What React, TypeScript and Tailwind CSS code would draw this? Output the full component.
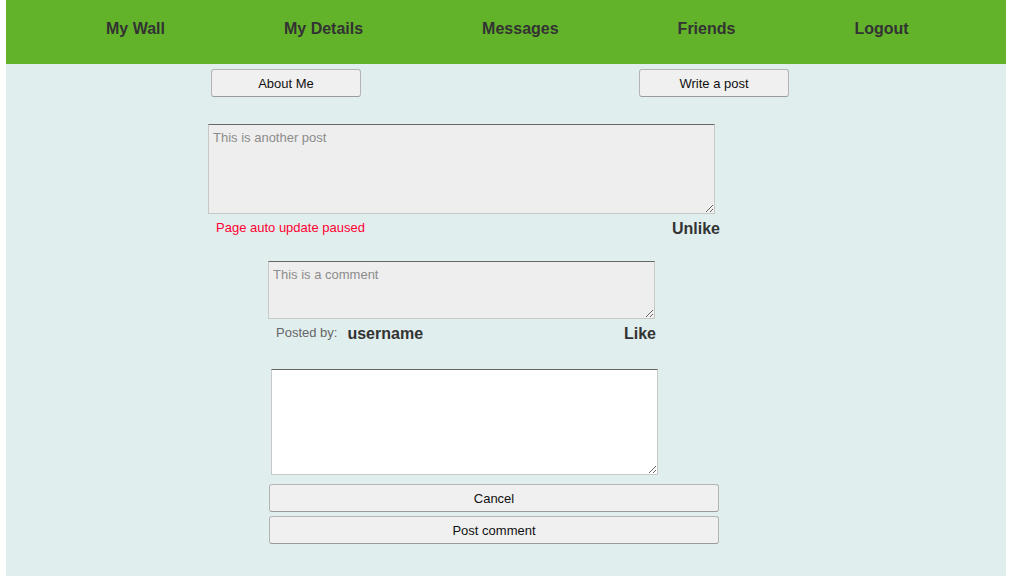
import React from "react";

const btn =
  "block h-[28px] pt-[2px] bg-[#f0f0f0] border border-[#b4b4b4] border-b-[#9a9a9a] rounded-[3px] text-[13px] text-[#111] font-['Liberation_Sans',Arial,sans-serif]";

const ta =
  "block resize border border-[#c8c8c8] border-t-[#666] px-[4px] pt-[5px] pb-[4px] text-[13px] leading-[15px] font-['Liberation_Sans',Arial,sans-serif] outline-none placeholder:text-[#8c8c8c] text-[#8c8c8c]";

export default function App() {
  return (
    <div className="min-h-screen bg-white font-['Liberation_Sans',Arial,sans-serif]">
      <div className="ml-[6px] w-[1000px] min-h-[576px] bg-[#e0eeee]">
        <nav className="h-[64px] bg-[#62b22a] flex items-center pl-[100px] gap-[119px] text-[16px] font-bold text-[#333] pb-[6px]">
          <span>My Wall</span>
          <span>My Details</span>
          <span>Messages</span>
          <span>Friends</span>
          <span>Logout</span>
        </nav>

        <div className="flex mt-[5px]">
          <button className={`${btn} ml-[205px] w-[150px]`}>About Me</button>
          <button className={`${btn} ml-[278px] w-[150px]`}>Write a post</button>
        </div>

        <textarea
          readOnly
          className={`${ta} mt-[27px] ml-[202px] w-[507px] h-[90px] bg-[#eeeeee]`}
          placeholder="This is another post"
        />
        <div className="ml-[210px] w-[504px] h-[26px] pt-[2px] flex items-center justify-between">
          <span className="text-[13px] text-[#ff0033]">Page auto update paused</span>
          <span className="text-[16px] font-bold text-[#333] pt-[2px]">Unlike</span>
        </div>

        <textarea
          readOnly
          className={`${ta} mt-[21px] ml-[262px] w-[387px] h-[58px] bg-[#eeeeee]`}
          placeholder="This is a comment"
        />
        <div className="ml-[270px] w-[380px] h-[26px] pt-[2px] flex items-center">
          <span className="text-[13px] text-[#666]">Posted by:</span>
          <span className="ml-[10px] text-[16px] font-bold text-[#333] pt-[2px]">username</span>
          <span className="ml-auto text-[16px] font-bold text-[#333] pt-[2px]">Like</span>
        </div>

        <textarea
          className={`${ta} mt-[24px] ml-[265px] w-[387px] h-[106px] bg-white`}
        />
        <button className={`${btn} mt-[9px] ml-[263px] w-[450px]`}>Cancel</button>
        <button className={`${btn} mt-[4px] ml-[263px] w-[450px]`}>Post comment</button>
      </div>
    </div>
  );
}
